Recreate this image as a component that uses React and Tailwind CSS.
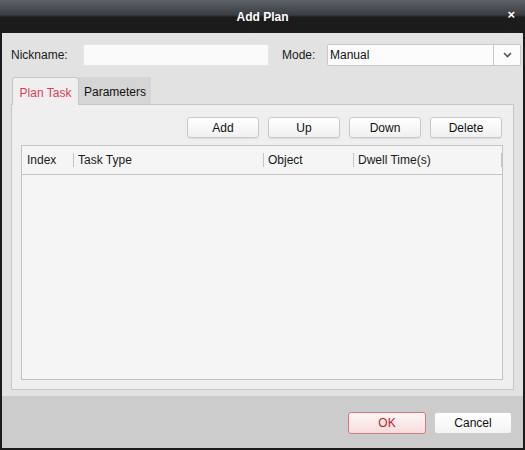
export default function App() {
  const columns = [
    { label: 'Index', width: 'w-[51px]' },
    { label: 'Task Type', width: 'w-[190px]' },
    { label: 'Object', width: 'w-[90px]' },
    { label: 'Dwell Time(s)', width: 'w-[148px]' },
  ];

  return (
    <div className="w-[525px] h-[450px] flex flex-col bg-[#1b1b1b] text-[12px] text-[#1a1a1a] font-['Liberation_Sans',Arial,sans-serif]">
      {/* Title bar */}
      <div className="h-[33px] shrink-0 relative flex items-center justify-center bg-[linear-gradient(to_bottom,#5d6269_0%,#3a3d41_45%,#1c1c1c_52%,#1b1b1b_100%)]">
        <span className="text-white font-bold text-[12px]">Add Plan</span>
        <span className="absolute right-[10px] top-[8px] text-white font-bold text-[13px] leading-none">×</span>
      </div>

      {/* Body */}
      <div className="flex-1 flex flex-col mx-[2px] mb-[2px] bg-[#e2e2e2]">
        <div className="flex flex-col px-[9px] pt-[11px]">
          {/* Nickname / Mode row */}
          <div className="flex items-center h-[22px] -mr-[7px]">
            <span className="w-[72px]">Nickname:</span>
            <div className="w-[186px] h-[22px] bg-[#fafafa] border border-[#e6e6e6]" />
            <span className="ml-[13px] w-[45px]">Mode:</span>
            <div className="flex-1 h-[22px] flex bg-[#fcfcfc] border border-[#c8c8c8] rounded-[2px]">
              <span className="flex-1 flex items-center pl-[2px] text-[#111]">Manual</span>
              <div className="w-[27px] flex items-center justify-center border-l border-[#c8c8c8]">
                <svg width="9" height="6" viewBox="0 0 9 6">
                  <path d="M1 1l3.5 3.5L8 1" fill="none" stroke="#555" strokeWidth="1.6" />
                </svg>
              </div>
            </div>
          </div>

          {/* Tabs */}
          <div className="flex mt-[10px] h-[28px] items-end">
            <div className="ml-[1px] w-[67px] h-[28px] flex items-center justify-center pt-[3px] bg-[#efefef] border border-b-0 border-[#c7c7c7] rounded-t-[3px] text-[#d8405a] relative top-[1px]">
              Plan Task
            </div>
            <div className="w-[72px] h-[27px] flex items-center justify-center pt-[3px] bg-[#d5d5d5] text-[#111]">
              Parameters
            </div>
          </div>

          {/* Tab panel */}
          <div className="h-[286px] flex flex-col bg-[#efefef] border border-[#c7c7c7] pt-[12px] pl-[9px] pr-[10px] pb-[9px]">
            <div className="flex justify-end gap-[9px] pr-[1px]">
              {['Add', 'Up', 'Down', 'Delete'].map((b) => (
                <button
                  key={b}
                  className="w-[72px] h-[21px] flex items-center justify-center rounded-[3px] border border-[#c9c9c9] bg-[linear-gradient(to_bottom,#ffffff,#f0f0f0)] text-[#111] shadow-[0_1px_1px_rgba(0,0,0,0.08)]"
                >
                  {b}
                </button>
              ))}
            </div>

            <div className="mt-[7px] flex-1 flex flex-col bg-[#f5f5f5] border border-[#c3c3c3]">
              <div className="h-[29px] flex items-center border-b border-[#c3c3c3]">
                {columns.map((c, i) => (
                  <div key={c.label} className={`${c.width} h-full flex items-center`}>
                    {i > 0 && <span className="w-px h-[14px] bg-[#c6c6c6] mr-[4px]" />}
                    <span className={i === 0 ? 'pl-[5px]' : ''}>{c.label}</span>
                  </div>
                ))}
                <span className="w-px h-[14px] bg-[#c6c6c6]" />
              </div>
            </div>
          </div>
        </div>

        {/* Footer */}
        <div className="mt-[6px] flex-1 flex items-start justify-end gap-[8px] bg-[#cccccc] pt-[16px] pr-[11px]">
          <button className="w-[78px] h-[22px] flex items-center justify-center rounded-[3px] border border-[#d67a7d] bg-[linear-gradient(to_bottom,#fff6f6,#f7dcdc)] text-[#c0182a]">
            OK
          </button>
          <button className="w-[78px] h-[22px] flex items-center justify-center rounded-[3px] border border-[#cfcfcf] bg-[linear-gradient(to_bottom,#ffffff,#f3f3f3)] text-[#111]">
            Cancel
          </button>
        </div>
      </div>
    </div>
  );
}
